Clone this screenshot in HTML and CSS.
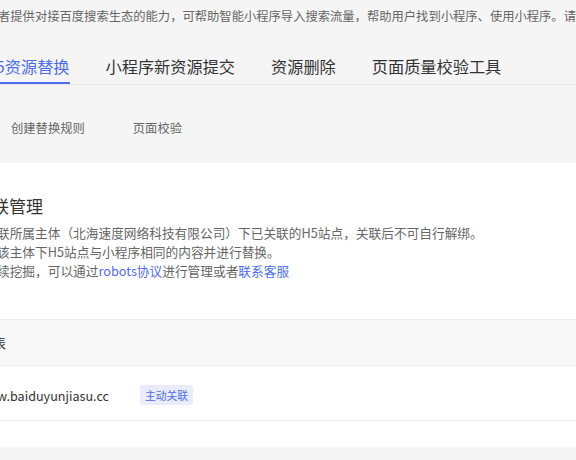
FILE: index.html
```html
<!DOCTYPE html>
<html lang="zh-CN">
<head>
<meta charset="utf-8">
<title>H5资源替换</title>
<link rel="stylesheet" href="styles.css">
</head>
<body>
<div class="page">
  <p class="intro">者提供对接百度搜索生态的能力，可帮助智能小程序导入搜索流量，帮助用户找到小程序、使用小程序。请</p>
  <nav class="tabs">
    <a class="tab active">H5资源替换</a>
    <a class="tab">小程序新资源提交</a>
    <a class="tab">资源删除</a>
    <a class="tab">页面质量校验工具</a>
  </nav>
  <div class="subtabs">
    <a class="subtab">创建替换规则</a>
    <a class="subtab">页面校验</a>
  </div>
  <section class="card">
    <h2 class="title">联管理</h2>
    <div class="desc">
      <p>联所属主体（北海速度网络科技有限公司）下已关联的H5站点，关联后不可自行解绑。</p>
      <p>该主体下H5站点与小程序相同的内容并进行替换。</p>
      <p>续挖掘，可以通过<a class="link">robots协议</a>进行管理或者<a class="link">联系客服</a></p>
    </div>
    <div class="table">
      <div class="thead">表</div>
      <div class="trow">
        <span class="site">w.baiduyunjiasu.cc</span>
        <span class="tag">主动关联</span>
      </div>
    </div>
  </section>
</div>
</body>
</html>
```
FILE: styles.css
```css
* { box-sizing: border-box; }
html, body { margin: 0; padding: 0; }
body {
  background: #f5f5f5;
  font-family: "Noto Sans CJK SC", "Microsoft YaHei", sans-serif;
  color: #333;
  overflow: hidden;
  width: 576px;
  height: 460px;
}
.page { width: 576px; }
.intro {
  margin: 0 0 0 -2px;
  height: 32px;
  line-height: 32px;
  font-size: 12.3px;
  color: #666;
  white-space: nowrap;
}
.tabs {
  display: flex;
  gap: 36px;
  border-bottom: 1px solid #e6e6e6;
}
.tab {
  padding: 22px 0 4px;
  line-height: 24px;
  font-size: 16.2px;
  color: #333;
  border-bottom: 2px solid transparent;
  white-space: nowrap;
}
.tab.active {
  color: #4e6ef2;
  border-bottom-color: #4e6ef2;
  margin-left: -16px;
}
.subtabs {
  display: flex;
  gap: 48px;
  padding: 33px 0 25px 11px;
  height: 78px;
}
.subtab {
  font-size: 12.3px;
  line-height: 20px;
  color: #666;
}
.card {
  background: #fff;
  padding-top: 31px;
  height: 284px;
}
.title {
  margin: 0 0 0 -8px;
  font-size: 17px;
  font-weight: normal;
  line-height: 24px;
  color: #333;
}
.desc {
  margin-top: 5px;
  margin-left: -3px;
  font-size: 12.7px;
  line-height: 19px;
  color: #666;
}
.desc p { margin: 0; white-space: nowrap; }
.link { color: #4e6ef2; }
.table { margin-top: 39px; }
.thead {
  height: 47px;
  line-height: 46px;
  background: #f8f8f8;
  border-top: 1px solid #eeeeee;
  border-bottom: 1px solid #eeeeee;
  font-size: 13px;
  color: #333;
  margin-left: -7px;
}
.trow {
  display: flex;
  align-items: center;
  height: 55px;
  border-bottom: 1px solid #eeeeee;
  padding-top: 4px;
}
.site {
  width: 143px;
  margin-left: -3px;
  font-size: 12.6px;
  color: #333;
}
.tag {
  display: inline-block;
  width: 53px;
  height: 20px;
  line-height: 20px;
  text-align: center;
  font-size: 10.8px;
  color: #4e6ef2;
  background: #e8ecfe;
  border-radius: 3px;
}
```
